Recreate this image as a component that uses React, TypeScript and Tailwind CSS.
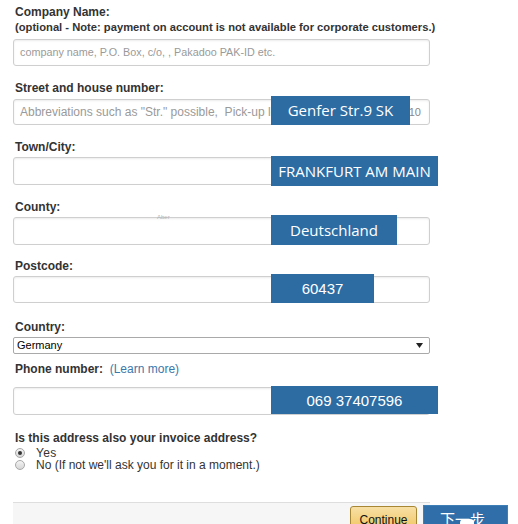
import React from "react";

type Overlay = { text: string; left: number; top: number; w: number; h: number; font?: "open" | "arial" };

function Badge({ o }: { o: Overlay }) {
  return (
    <div
      className={
        "absolute flex items-center justify-center bg-[#2d6ca3] text-white text-[15px] leading-none whitespace-nowrap " +
        (o.font === "arial" ? "font-['Liberation_Sans',Arial,sans-serif]" : "font-['Open_Sans','Noto_Sans',sans-serif]")
      }
      style={{ left: o.left, top: o.top, width: o.w, height: o.h }}
    >
      {o.text}
    </div>
  );
}

function Field({
  label,
  labelMt,
  inputMt,
  inputH,
  children,
  overlay,
  extra,
}: {
  label: React.ReactNode;
  labelMt: string;
  inputMt: string;
  inputH: string;
  children?: React.ReactNode;
  overlay?: Overlay;
  extra?: React.ReactNode;
}) {
  return (
    <div className={labelMt}>
      <div className="text-[12px] leading-[14px] font-bold text-[#333] pl-[2px]">{label}</div>
      <div className={"relative " + inputMt}>
        <div
          className={
            "w-[417px] border border-[#cfcfcf] rounded-[3px] bg-white shadow-[inset_0_1px_2px_rgba(0,0,0,0.08)] flex items-center px-[6px] text-[12px] text-[#9a9a9a] overflow-hidden whitespace-nowrap " +
            inputH
          }
        >
          {children}
        </div>
        {extra}
        {overlay && <Badge o={overlay} />}
      </div>
    </div>
  );
}

function Radio({ checked }: { checked?: boolean }) {
  return (
    <span className="w-[10px] h-[10px] rounded-full border border-[#a8a8a8] bg-gradient-to-b from-[#f4f4f4] to-[#d6d6d6] flex items-center justify-center">
      {checked && <span className="w-[4px] h-[4px] rounded-full bg-[#333]" />}
    </span>
  );
}

export default function App() {
  return (
    <div className="relative w-[518px] h-[524px] overflow-hidden bg-white pl-[13px] font-['Liberation_Sans',Arial,sans-serif] text-[#333]">
      <div className="pt-[5px] text-[12px] leading-[14px] font-bold pl-[2px]">Company Name:</div>
      <div className="mt-[2px] text-[11.2px] leading-[12px] font-bold pl-[2px] whitespace-nowrap">
        (optional - Note: payment on account is not available for corporate customers.)
      </div>
      <div className="mt-[6px] w-[417px] h-[27px] border border-[#cfcfcf] rounded-[3px] shadow-[inset_0_1px_2px_rgba(0,0,0,0.08)] flex items-center px-[6px] text-[10.8px] text-[#9a9a9a]">
        company name, P.O. Box, c/o, , Pakadoo PAK-ID etc.
      </div>

      <Field
        label="Street and house number:"
        labelMt="mt-[15px]"
        inputMt="mt-[4px]"
        inputH="h-[26px] justify-between"
        overlay={{ text: "Genfer Str.9 SK", left: 258, top: -3, w: 139, h: 29 }}
      >
        <span className="w-[290px] overflow-hidden">Abbreviations such as "Str." possible,&nbsp; Pick-up location not allowed</span>
        <span className="text-[11px] text-[#888] pr-[2px]">10</span>
      </Field>

      <Field
        label="Town/City:"
        labelMt="mt-[15px]"
        inputMt="mt-[3px]"
        inputH="h-[28px]"
        overlay={{ text: "FRANKFURT AM MAIN", left: 258, top: -1, w: 167, h: 30 }}
      />

      <Field
        label="County:"
        labelMt="mt-[15px]"
        inputMt="mt-[3px]"
        inputH="h-[28px]"
        overlay={{ text: "Deutschland", left: 258, top: -2, w: 126, h: 30 }}
        extra={
          <span className="absolute left-[144px] top-[-3px] text-[6px] leading-[6px] text-[#b5b5b5]">Aber</span>
        }
      />

      <Field
        label="Postcode:"
        labelMt="mt-[14px]"
        inputMt="mt-[3px]"
        inputH="h-[27px]"
        overlay={{ text: "60437", left: 258, top: -2, w: 103, h: 29, font: "arial" }}
      />

      <div className="mt-[17px] text-[12px] leading-[14px] font-bold pl-[2px]">Country:</div>
      <div className="mt-[3px] w-[417px] h-[17px] border border-[#a9a9a9] rounded-[2px] flex items-center justify-between pl-[3px] pr-[6px] text-[11px] text-black">
        <span>Germany</span>
        <svg width="7" height="5" viewBox="0 0 7 5">
          <path d="M0 0H7L3.5 5Z" fill="#222" />
        </svg>
      </div>

      <Field
        label={
          <>
            Phone number:{" "}
            <span className="font-normal text-[#3b78ab]">&nbsp;(Learn more)</span>
          </>
        }
        labelMt="mt-[8px]"
        inputMt="mt-[11px]"
        inputH="h-[28px]"
        overlay={{ text: "069 37407596", left: 258, top: -1, w: 167, h: 28, font: "arial" }}
      />

      <div className="mt-[16px] text-[12px] leading-[14px] font-bold pl-[2px]">Is this address also your invoice address?</div>
      <div className="mt-[2px] flex flex-col text-[12px] leading-[12px] text-[#333]">
        <label className="flex items-center h-[12px] pl-[2px]">
          <Radio checked />
          <span className="ml-[11px] tracking-[0.3px]">Yes</span>
        </label>
        <label className="flex items-center h-[12px] pl-[2px]">
          <Radio />
          <span className="ml-[11px]">No (If not we'll ask you for it in a moment.)</span>
        </label>
      </div>

      <div className="mt-[31px] w-[417px] h-[40px] border-t border-[#dedede] bg-[#f6f6f6] flex justify-end pt-[3px] pr-[13px]">
        <button className="h-[29px] w-[67px] rounded-[3px] border border-[#a88734] bg-gradient-to-b from-[#f7dfa5] to-[#f0c14b] text-[12px] text-[#111] pb-[2px]">
          Continue
        </button>
      </div>

      <div className="absolute left-[423px] top-[505px] w-[85px] h-[30px] bg-[#2f6ea8] border border-[#3f7fb8] flex justify-center pt-[4px]">
        <span className="text-white text-[15px] leading-[18px] font-['Noto_Sans_CJK_SC',sans-serif] -ml-[6px]">下一步</span>
        <span className="absolute left-[36px] top-[13px] w-[14px] h-[8px] rounded-full bg-white" />
      </div>
    </div>
  );
}
